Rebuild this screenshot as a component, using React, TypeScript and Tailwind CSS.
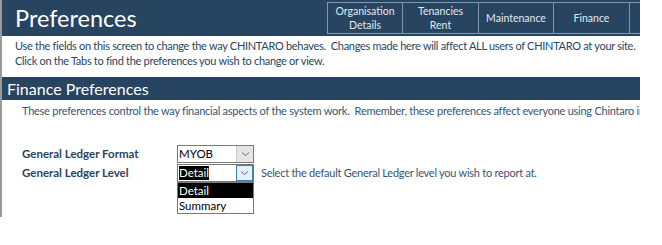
const tabs = [
  ['Organisation', 'Details'],
  ['Tenancies', 'Rent'],
  ['Maintenance'],
  ['Finance'],
  ['General'],
]

function Chevron() {
  return (
    <svg width="9" height="6" viewBox="0 0 9 6" fill="none">
      <path d="M1 1.5 L4.5 4.5 L8 1.5" stroke="#6b6b6b" strokeWidth="1" />
    </svg>
  )
}

export default function App() {
  return (
    <div className="w-[662px] h-[245px] overflow-hidden bg-white font-['Lato',sans-serif] text-[#2a4560]">
      <div className="w-[640px] h-[217px] overflow-hidden border-l-2 border-[#9a9a9a]">
        <div className="h-9 bg-[#274461] flex items-start overflow-hidden">
          <h1 className="w-[325px] shrink-0 pl-[13px] pt-[2px] text-[23.5px] leading-[32px] text-white">Preferences</h1>
          <div className="mt-[2px] flex h-[32px] border-y border-l border-[#8396aa] shrink-0">
            {tabs.map((t, i) => (
              <div
                key={i}
                className={`flex flex-col items-center justify-center border-r border-[#8396aa] text-[10.5px] leading-[14px] text-[#e3e9ef] ${
                  i === 0 ? 'w-[75px]' : i === 1 ? 'w-[76px]' : i === 2 ? 'w-[75px]' : 'w-[76px]'
                }`}
              >
                {t.map((l) => (
                  <span key={l}>{l}</span>
                ))}
              </div>
            ))}
          </div>
        </div>
        <div className="pl-[13px] pt-[2px] text-[11px] tracking-[-0.3px] leading-[15px] whitespace-nowrap">
          <p>Use the fields on this screen to change the way CHINTARO behaves.&nbsp; Changes made here will affect ALL users of CHINTARO at your site.</p>
          <p>Click on the Tabs to find the preferences you wish to change or view.</p>
        </div>
        <div className="mt-[9px] h-[23px] bg-[#274461] pl-[5px] text-[16px] leading-[23px] text-white">Finance Preferences</div>
        <p className="pl-[20px] pt-[3px] text-[11px] tracking-[-0.25px] leading-[15px] whitespace-nowrap overflow-hidden text-[#3a5470]">
          These preferences control the way financial aspects of the system work.&nbsp; Remember, these preferences affect everyone using Chintaro in your organisation.
        </p>
        <div className="mt-[27px] pl-[20px] flex flex-col gap-[1px]">
          <div className="flex items-center h-[18px]">
            <span className="w-[155px] text-[11.5px] font-bold">General Ledger Format</span>
            <div className="w-[77px] h-[18px] border border-[#7a7a7a] flex">
              <span className="flex-1 text-[11.5px] leading-[16px] pl-[1px] text-black">MYOB</span>
              <span className="w-[17px] h-full bg-[#e5e5e5] border-l border-[#c8c8c8] flex items-center justify-center">
                <Chevron />
              </span>
            </div>
          </div>
          <div className="flex items-center h-[18px]">
            <span className="w-[155px] text-[11.5px] font-bold">General Ledger Level</span>
            <div className="relative w-[77px] h-[18px]">
              <div className="h-full border border-[#7a7a7a] flex">
                <span className="flex-1 pl-[1px] flex items-center">
                  <span className="bg-black text-white text-[11.5px] leading-[14px]">Detail</span>
                </span>
                <span className="w-[17px] h-full bg-[#e5f1fb] border border-[#3c7fb1] flex items-center justify-center">
                  <Chevron />
                </span>
              </div>
              <div className="absolute left-0 top-[18px] w-[77px] border border-[#7a7a7a] bg-white text-[11.5px] leading-[15px] text-black">
                <div className="bg-black text-white pl-[1px]">Detail</div>
                <div className="pl-[1px]">Summary</div>
              </div>
            </div>
            <span className="ml-[7px] text-[11px] tracking-[-0.25px] text-[#3a5470]">Select the default General Ledger level you wish to report at.</span>
          </div>
        </div>
      </div>
    </div>
  )
}
